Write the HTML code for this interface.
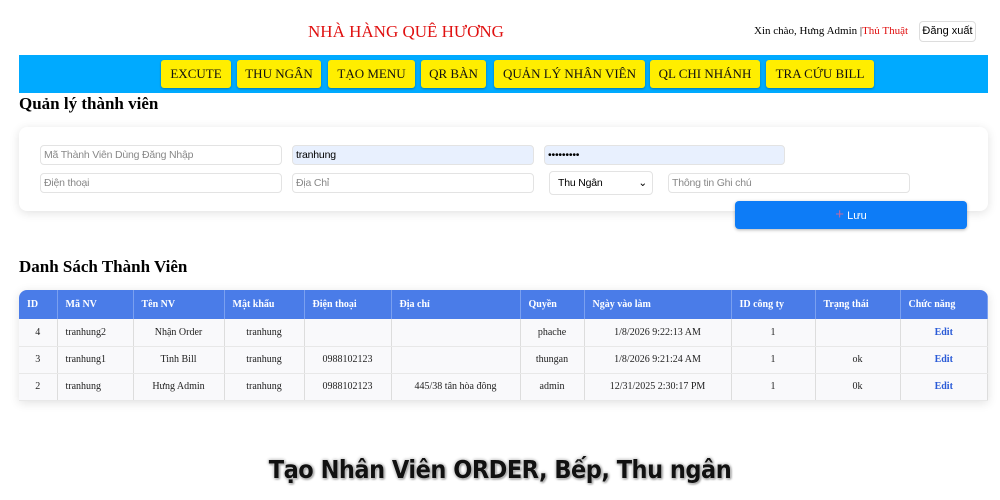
<!DOCTYPE html>
<html><head><meta charset="utf-8"><style>
*{margin:0;padding:0;box-sizing:border-box}
body{width:1000px;height:500px;background:#fff;position:relative;overflow:hidden;font-family:"Liberation Serif",serif}
.a{position:absolute}
.title{left:0;width:812px;text-align:center;top:22px;color:#e01010;font-size:17px}
.nav{left:19px;top:55px;width:969px;height:38px;background:#00aaff}
.btn{position:absolute;top:5px;height:28px;background:#ffee00;border-radius:3px;font-size:13px;text-align:center;line-height:28px;color:#111;box-shadow:0 1px 2px rgba(0,0,0,.3)}
h2{position:absolute;font-size:17px;font-weight:bold;color:#000}
.card{left:19px;top:127px;width:969px;height:84px;background:#fff;border-radius:8px;box-shadow:0 2px 10px rgba(0,0,0,.12)}
.in{position:absolute;height:20px;border:1px solid #e3e3e3;border-radius:4px;font-family:"Liberation Sans",sans-serif;font-size:10.5px;color:#888;padding-left:3px;line-height:19px;background:#fff;letter-spacing:-0.2px}
.fill{background:#e8f0fe;color:#000}
table{position:absolute;left:19px;top:290px;width:969px;border-collapse:collapse;font-size:10px;border-radius:8px 8px 0 0;overflow:hidden;box-shadow:0 2px 10px rgba(0,0,0,.12)}
th{background:#4a7ce8;color:#fff;height:29px;text-align:left;padding-left:8px;font-size:10px;border-right:1px solid #7aa0f0}
td{height:27px;text-align:center;border-right:1px solid #ddd;border-bottom:1px solid #e8e8e8;background:#f9f9fb;color:#222}
td.l{text-align:left;padding-left:8px}
.e{color:#2a5bd7;font-weight:bold}
.cap{left:0;width:1000px;text-align:center;top:455px;font-family:"DejaVu Sans Condensed","DejaVu Sans",sans-serif;font-weight:bold;font-size:25px;color:#111;letter-spacing:-0.5px;text-shadow:0 0 2px #fff,0 0 3px #888,1px 1px 2px #777}
</style></head><body>
<div class="a title">NHÀ HÀNG QUÊ HƯƠNG</div>
<div class="a" style="left:754px;top:25px;font-size:11px">Xin chào, Hưng Admin |<span style="color:#e01010">Thủ Thuật</span></div>
<div class="a" style="left:919px;top:21px;width:57px;height:21px;border:1px solid #ddd;border-radius:4px;font-family:'Liberation Sans',sans-serif;font-size:11px;line-height:19px;text-align:center">Đăng xuất</div>
<div class="a nav">
<div class="btn" style="left:142px;width:70px">EXCUTE</div>
<div class="btn" style="left:218px;width:84px">THU NGÂN</div>
<div class="btn" style="left:309px;width:87px">TẠO MENU</div>
<div class="btn" style="left:402px;width:65px">QR BÀN</div>
<div class="btn" style="left:475px;width:151px">QUẢN LÝ NHÂN VIÊN</div>
<div class="btn" style="left:631px;width:110px">QL CHI NHÁNH</div>
<div class="btn" style="left:747px;width:108px">TRA CỨU BILL</div>
</div>
<h2 style="left:19px;top:94px">Quản lý thành viên</h2>
<div class="a card"></div>
<div class="in" style="left:40px;top:145px;width:242px">Mã Thành Viên Dùng Đăng Nhập</div>
<div class="in fill" style="left:292px;top:145px;width:242px">tranhung</div>
<div class="in fill" style="left:544px;top:145px;width:241px">•••••••••</div>
<div class="in" style="left:40px;top:173px;width:242px">Điện thoại</div>
<div class="in" style="left:292px;top:173px;width:242px">Địa Chỉ</div>
<div class="in" style="left:549px;top:171px;width:104px;height:24px;line-height:22px;color:#000;padding-left:8px">Thu Ngân<span style="position:absolute;right:5px">⌄</span></div>
<div class="in" style="left:668px;top:173px;width:242px">Thông tin Ghi chú</div>
<div class="a" style="left:735px;top:201px;width:232px;height:28px;background:#0d7cf7;border-radius:4px;color:#fff;font-family:'Liberation Sans',sans-serif;font-size:11px;text-align:center;line-height:28px;box-shadow:0 1px 3px rgba(0,0,0,.3)"><span style="color:#c06aa0;font-size:15px">+</span> Lưu</div>
<h2 style="left:19px;top:257px">Danh Sách Thành Viên</h2>
<table>
<tr><th style="width:38px">ID</th><th style="width:76px">Mã NV</th><th style="width:91px">Tên NV</th><th style="width:80px">Mật khẩu</th><th style="width:87px">Điện thoại</th><th style="width:129px">Địa chỉ</th><th style="width:64px">Quyền</th><th style="width:147px">Ngày vào làm</th><th style="width:84px">ID công ty</th><th style="width:85px">Trạng thái</th><th>Chức năng</th></tr>
<tr><td>4</td><td class="l">tranhung2</td><td>Nhận Order</td><td>tranhung</td><td></td><td></td><td>phache</td><td>1/8/2026 9:22:13 AM</td><td>1</td><td></td><td class="e">Edit</td></tr>
<tr><td>3</td><td class="l">tranhung1</td><td>Tinh Bill</td><td>tranhung</td><td>0988102123</td><td></td><td>thungan</td><td>1/8/2026 9:21:24 AM</td><td>1</td><td>ok</td><td class="e">Edit</td></tr>
<tr><td>2</td><td class="l">tranhung</td><td>Hưng Admin</td><td>tranhung</td><td>0988102123</td><td>445/38 tân hòa đông</td><td>admin</td><td>12/31/2025 2:30:17 PM</td><td>1</td><td>0k</td><td class="e">Edit</td></tr>
</table>
<div class="a cap">Tạo Nhân Viên ORDER, Bếp, Thu ngân</div>
</body></html>
